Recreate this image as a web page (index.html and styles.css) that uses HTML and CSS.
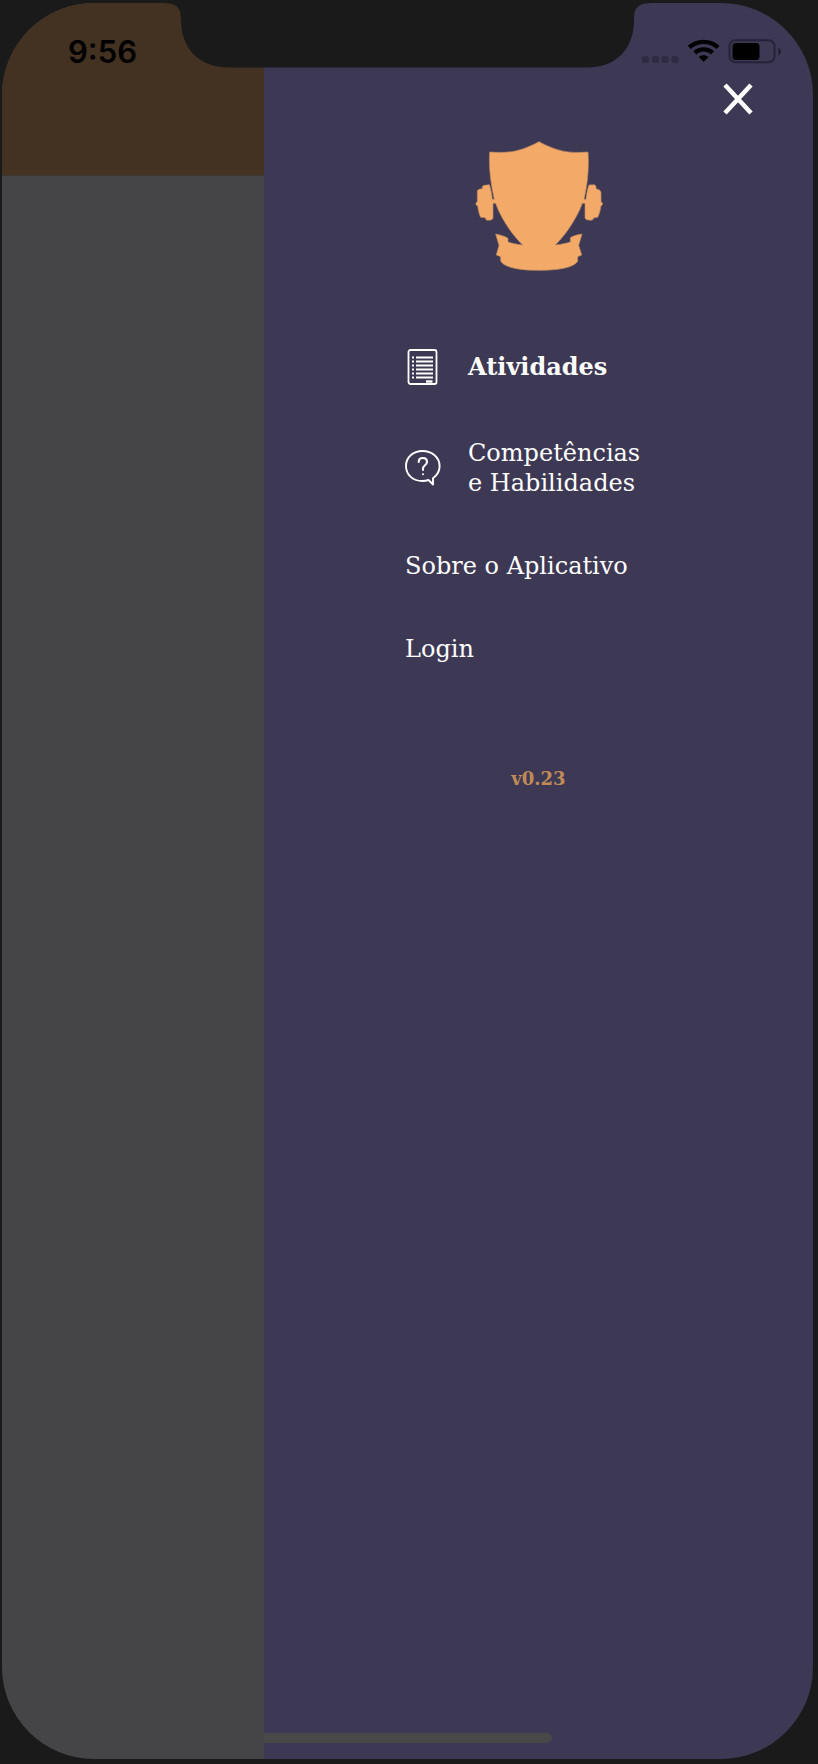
FILE: index.html
```html
<!DOCTYPE html>
<html lang="pt-BR">
<head>
<meta charset="utf-8">
<meta name="viewport" content="width=device-width, initial-scale=1">
<title>Menu</title>
<link rel="stylesheet" href="styles.css">
</head>
<body>
<div class="screen">
  <div class="backdrop"><div class="backdrop-header"></div></div>
  <aside class="drawer">
    <div class="drawer-top">
      <button class="close" type="button" aria-label="Fechar">
        <svg viewBox="0 0 30 32" width="30" height="32" aria-hidden="true"><path d="M2 2 28 30M28 2 2 30" stroke="#fff" stroke-width="4.500"/></svg>
      </button>
    </div>
    <svg class="logo" viewBox="42 32 390 396" role="img" aria-label="Escudo">
      <path fill="#f3aa69" stroke="#c28c60" stroke-width="2" d="M89 68C150 73 184 65 237 37C290 65 324 73 384 68C387 112 384 158 372 210H378C380 194 382 180 387 167L403 166L408 171V178L420 183L423 190V218L427 220V227L423 229C421 243 418 254 413 264L400 266V270L393 273L379 271L375 266V222H367C352 264 318 316 286 347C304 345 318 342 331 338V325C341 319 354 316 366 314L356 348L365 377L353 382V395C344 415 292 423 237 423C182 423 132 415 122 395V382L109 377L117 348L107 314C120 317 134 320 144 327V338C156 342 170 345 188 347C156 316 122 266 107 222H99V267L94 272L81 273L76 269V265L62 264C57 254 55 243 53 229L48 227V220L52 218V184L57 180L67 178V171L73 168L88 166C93 180 95 194 97 210H103C91 158 86 110 89 68Z"/>
    </svg>
    <nav class="menu">
      <a class="item active" href="#atividades">
        <svg class="icon" viewBox="0 0 36 36" aria-hidden="true" fill="none" stroke="#fff">
          <rect x="3.500" y="1" width="28" height="34" rx="2" stroke-width="1.800"/>
          <path stroke-width="2.200" d="M11 8.500H28M11 12.500H28M11 16.500H28M11 20.500H28M11 24.500H28M11 28.500H28"/>
          <path stroke-width="2" d="M7 8.500h2M7 12.500h2M7 16.500h2M7 20.500h2M7 24.500h2M7 28.500h2"/>
          <path stroke-width="2.400" d="M21 32.500h6.500"/>
        </svg>
        <span>Atividades</span>
      </a>
      <a class="item" href="#competencias">
        <svg class="icon" viewBox="0 0 36 36" aria-hidden="true" fill="none" stroke="#fff" stroke-linecap="round" stroke-linejoin="round">
          <path stroke-width="1.900" d="M28 28.200C32 25.300 34.600 21 34.600 16.200C34.600 7.500 27 1 17.500 1C8 1 1 7.500 1 16C1 25 8 31 17.500 31C19.500 31 21.500 30.700 23.500 30L28 34.500Z"/>
          <path stroke-width="2.100" d="M13.700 12C13.700 9.500 15.300 8 17.800 8C20.400 8 22 9.700 22 12C22 15.200 18 15.300 18 18.500V20M18 24.200V24.300"/>
        </svg>
        <span>Competências<br>e Habilidades</span>
      </a>
      <a class="item" href="#sobre">Sobre o Aplicativo</a>
      <a class="item" href="#login">Login</a>
    </nav>
    <p class="version">v0.23</p>
    <div class="home-indicator"></div>
  </aside>
  <svg class="notch" viewBox="0 0 494 65" width="494" height="65" aria-hidden="true"><path fill="#1a1a1a" d="M0 0C16 0 20 4 20 17C20 44 37 64.500 68 64.500H426C457 64.500 473 44 473 17C473 4 477 0 493 0Z"/></svg>
  <div class="status">
    <time class="clock">9:56</time>
    <svg class="indicators" viewBox="0 0 140 26" width="140" height="26" aria-hidden="true">
      <g fill="#2f2b45"><rect x="1" y="17" width="7" height="7" rx="2.500"/><rect x="11" y="17" width="7" height="7" rx="2.500"/><rect x="20.500" y="17" width="7" height="7" rx="2.500"/><rect x="30.500" y="17" width="7" height="7" rx="2.500"/></g>
      <path d="M46.700 6.800C55.500-1.300 69.800-1.300 78.600 6.800L75.500 10C68.300 3.300 57 3.300 49.800 10ZM52.200 12.200C58 6.800 67.300 6.800 73.100 12.200L69.900 15.400C65.800 11.600 59.500 11.600 55.400 15.400ZM57.800 18C60.500 15.500 64.800 15.500 67.500 18L62.650 23Z"/>
      <rect x="88.500" y="1.300" width="45" height="22" rx="6" fill="none" stroke="#25223a" stroke-width="2"/>
      <rect x="91.500" y="4" width="27" height="17" rx="3.500"/>
      <path fill="#25223a" d="M137 8.500C141 10 141 15 137 16.500Z"/>
    </svg>
  </div>
</div>
</body>
</html>
```
FILE: styles.css
```css
* {
  box-sizing: border-box;
}

body {
  margin: 0;
  min-height: 100vh;
  display: flex;
  padding: 3px 5px 5px 2px;
  background: #1a1a1a;
  font-family: "DejaVu Serif", serif;
}

.screen {
  position: relative;
  flex: 1;
  display: grid;
  grid-template-columns: 262px 1fr;
  border-radius: 92px;
  overflow: hidden;
}

.backdrop {
  background: #454547;
}

.backdrop-header {
  height: 173px;
  background: #433122;
  border-bottom: 1px solid #3b3734;
}

.drawer {
  display: flex;
  flex-direction: column;
  align-items: center;
  background: #3d3854;
}

.drawer-top {
  align-self: stretch;
  display: flex;
  justify-content: flex-end;
  padding: 80px 60px 0 0;
}

.close {
  display: flex;
  padding: 0;
  border: 0;
  background: none;
  cursor: pointer;
}

.logo {
  width: 130px;
  height: 132px;
  margin-top: 25px;
}

.menu {
  width: 267px;
  margin-top: 77px;
  display: flex;
  flex-direction: column;
  align-items: flex-start;
  gap: 53px;
}

.item {
  display: flex;
  align-items: center;
  gap: 27px;
  color: #fff;
  font-size: 24px;
  line-height: 30px;
  text-decoration: none;
  white-space: nowrap;
}

.active {
  font-weight: bold;
}

.icon {
  width: 36px;
  height: 36px;
}

.version {
  margin: 100px 0 0;
  color: #c08b57;
  font-size: 18px;
  font-weight: bold;
  line-height: 30px;
}

.home-indicator {
  align-self: flex-start;
  width: 288px;
  height: 10px;
  margin-top: auto;
  margin-bottom: 16px;
  border-radius: 0 5px 5px 0;
  background: #484848;
}

.notch {
  position: absolute;
  top: 0;
  left: 50%;
  transform: translateX(-50%);
}

.status {
  position: absolute;
  top: 32px;
  left: 66px;
  right: 32px;
  display: flex;
  align-items: center;
  justify-content: space-between;
}

.clock {
  font-family: Inter, sans-serif;
  font-size: 31px;
  font-weight: 600;
  line-height: 34px;
}
```
